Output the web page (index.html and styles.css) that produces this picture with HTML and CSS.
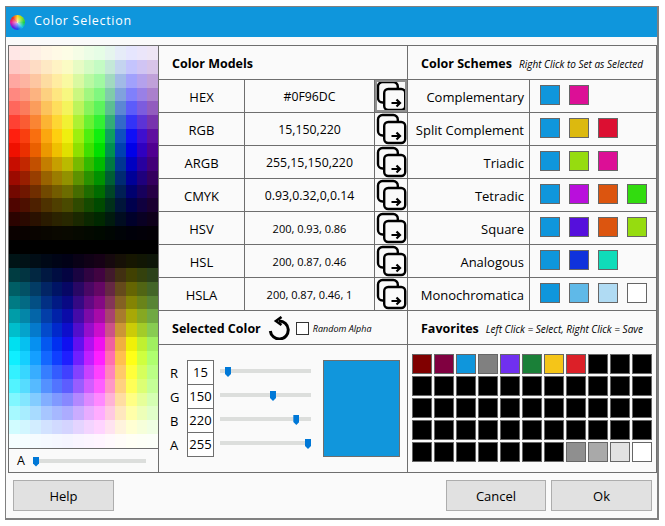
FILE: index.html
```html
<!DOCTYPE html>
<html lang="en">
<head>
    <meta charset="UTF-8">
    <meta name="viewport" content="width=device-width, initial-scale=1.0">
    <title>Color Selection</title>
    <link rel="stylesheet" href="styles.css">
</head>
<body>
    <svg class="defs" width="0" height="0">
        <symbol id="copy" viewBox="0 0 32 32">
            <path d="M22.8 8 V6.5 a4.5 4.5 0 0 0 -4.5 -4.5 H7.5 a4.5 4.5 0 0 0 -4.5 4.5 V18 a4.5 4.5 0 0 0 4.5 4.5 H9" fill="none" stroke="#000" stroke-width="2.4"/>
            <rect x="9.2" y="9" width="21" height="21" rx="4" fill="none" stroke="#000" stroke-width="2.4"/>
            <path d="M16.5 23 H25 M21.5 19.5 L25 23 L21.5 26.5" fill="none" stroke="#000" stroke-width="2.2"/>
        </symbol>
    </svg>

    <div class="window">
        <div class="titlebar">
            <span class="wheel"></span>
            <span class="title">Color Selection</span>
        </div>

        <div class="panel">
            <div class="col-picker">
                <div class="picker" id="picker"></div>
                <div class="alpha">
                    <span>A</span>
                    <input type="range" class="slider alpha-slider" min="0" max="255" value="0">
                </div>
            </div>

            <div class="col-models">
                <div class="head"><h2>Color Models</h2></div>
                <div class="model"><b>HEX</b><span>#0F96DC</span><button class="copy focus"><svg><use href="#copy"/></svg></button></div>
                <div class="model"><b>RGB</b><span>15,150,220</span><button class="copy"><svg><use href="#copy"/></svg></button></div>
                <div class="model"><b>ARGB</b><span>255,15,150,220</span><button class="copy"><svg><use href="#copy"/></svg></button></div>
                <div class="model"><b>CMYK</b><span>0.93,0.32,0,0.14</span><button class="copy"><svg><use href="#copy"/></svg></button></div>
                <div class="model"><b>HSV</b><span class="small">200, 0.93, 0.86</span><button class="copy"><svg><use href="#copy"/></svg></button></div>
                <div class="model"><b>HSL</b><span class="small">200, 0.87, 0.46</span><button class="copy"><svg><use href="#copy"/></svg></button></div>
                <div class="model"><b>HSLA</b><span class="small">200, 0.87, 0.46, 1</span><button class="copy"><svg><use href="#copy"/></svg></button></div>

                <div class="head head-selected">
                    <h2>Selected Color</h2>
                    <svg class="reset" width="24" height="24" viewBox="0 0 24 24">
                        <path d="M11 5 A9 9 0 1 1 2.3 15" fill="none" stroke="#000" stroke-width="3"/>
                        <path d="M13.5 1 L8 5 L13.5 9" fill="none" stroke="#000" stroke-width="2.6"/>
                    </svg>
                    <input type="checkbox" class="check">
                    <em class="note-small">Random Alpha</em>
                </div>
                <div class="selected">
                    <div class="channels">
                        <label>R</label><input type="text" class="num" value="15"><input type="range" class="slider" min="0" max="255" value="15">
                        <label>G</label><input type="text" class="num" value="150"><input type="range" class="slider" min="0" max="255" value="150">
                        <label>B</label><input type="text" class="num" value="220"><input type="range" class="slider" min="0" max="255" value="220">
                        <label>A</label><input type="text" class="num" value="255"><input type="range" class="slider" min="0" max="255" value="255">
                    </div>
                    <div class="preview"></div>
                </div>
            </div>

            <div class="col-schemes">
                <div class="head"><h2>Color Schemes</h2><em class="note">Right Click to Set as Selected</em></div>
                <div class="scheme"><b>Complementary</b><div class="swatches">
                    <i style="background:#0f96dc"></i><i style="background:#dc0f96"></i>
                </div></div>
                <div class="scheme"><b>Split Complement</b><div class="swatches">
                    <i style="background:#0f96dc"></i><i style="background:#dcb90f"></i><i style="background:#dc0f32"></i>
                </div></div>
                <div class="scheme"><b>Triadic</b><div class="swatches">
                    <i style="background:#0f96dc"></i><i style="background:#96dc0f"></i><i style="background:#dc0f96"></i>
                </div></div>
                <div class="scheme"><b>Tetradic</b><div class="swatches">
                    <i style="background:#0f96dc"></i><i style="background:#b90fdc"></i><i style="background:#dc550f"></i><i style="background:#32dc0f"></i>
                </div></div>
                <div class="scheme"><b>Square</b><div class="swatches">
                    <i style="background:#0f96dc"></i><i style="background:#550fdc"></i><i style="background:#dc550f"></i><i style="background:#96dc0f"></i>
                </div></div>
                <div class="scheme"><b>Analogous</b><div class="swatches">
                    <i style="background:#0f96dc"></i><i style="background:#0f32dc"></i><i style="background:#0fdcb9"></i>
                </div></div>
                <div class="scheme"><b>Monochromatica</b><div class="swatches">
                    <i style="background:#0f96dc"></i><i style="background:#5fb9e8"></i><i style="background:#b0dbf3"></i><i style="background:#ffffff"></i>
                </div></div>

                <div class="head head-favorites"><h2>Favorites</h2><em class="note">Left Click = Select, Right Click = Save</em></div>
                <div class="favorites" id="favorites"></div>
            </div>
        </div>

        <div class="buttons">
            <button class="btn">Help</button>
            <span class="spacer"></span>
            <button class="btn btn-cancel">Cancel</button>
            <button class="btn">Ok</button>
        </div>
    </div>

    <script src="picker.js"></script>
</body>
</html>
```

FILE: styles.css
```css
* {
    box-sizing: border-box;
}

body {
    margin: 0;
    padding: 6px 0 0 5px;
    background-color: #fff;
    font-family: "Open Sans", "Noto Sans", sans-serif;
    font-size: 13px;
    color: #000;
}

.defs {
    position: absolute;
}

.window {
    width: 654px;
    height: 514px;
    border: 1px solid #808080;
    border-width: 1px 2px 2px 1px;
    background-color: #fafafa;
}

.titlebar {
    display: flex;
    align-items: center;
    height: 30px;
    padding-left: 4px;
    background-color: #0f96dc;
    color: #fff;
}

.wheel {
    width: 15px;
    height: 15px;
    margin-top: 1px;
    border-radius: 50%;
    background:
        radial-gradient(circle, rgba(255, 255, 255, 0.7) 0, rgba(255, 255, 255, 0) 60%),
        conic-gradient(#ffd21a, #8fe01a, #1ad04a, #1ac8e0, #1a50f0, #6a1ae0, #e01a9a, #f0301a, #ffd21a);
}

.title {
    margin: -3px 0 0 9px;
    font-size: 12.5px;
    letter-spacing: 0.7px;
}

.panel {
    display: grid;
    grid-template-columns: 150px 249px 248px;
    width: 649px;
    height: 428px;
    margin: 8px 0 0 2px;
    border: 1px solid #6e6e6e;
}

.col-picker {
    display: flex;
    flex-direction: column;
    border-right: 1px solid #6e6e6e;
}

.picker {
    display: grid;
    grid-template-columns: repeat(14, 1fr);
    grid-template-rows: repeat(29, 1fr);
    height: 402px;
}

.alpha {
    display: flex;
    align-items: center;
    flex: 1;
    padding-left: 8px;
    border-top: 1px solid #6e6e6e;
}

.alpha span {
    width: 16px;
    font-size: 12.5px;
}

.col-models {
    border-right: 1px solid #6e6e6e;
}

.head {
    display: flex;
    align-items: center;
    height: 34px;
    padding: 2px 0 0 13px;
    border-bottom: 1px solid #6e6e6e;
}

h2 {
    margin: 0;
    font-size: 12.5px;
    font-weight: 700;
}

.model {
    display: grid;
    grid-template-columns: 86px 130px 32px;
    grid-template-rows: 32px;
    height: 33px;
    border-bottom: 1px solid #6e6e6e;
    text-align: center;
}

.model b,
.model span {
    line-height: 34px;
    border-right: 1px solid #6e6e6e;
}

.model b {
    font-size: 13px;
    font-weight: 500;
}

.model span {
    font-size: 12.3px;
}

.model .small {
    font-size: 11px;
}

.copy {
    width: 32px;
    height: 32px;
    padding: 0;
    border: 0;
    background: none;
}

.copy svg {
    display: block;
    width: 32px;
    height: 32px;
}

.copy.focus {
    outline: 2px solid #909090;
    outline-offset: -2px;
}

.head-selected .reset {
    margin: -2px 0 0 7px;
}

.check {
    appearance: none;
    width: 13px;
    height: 13px;
    margin: 0 0 0 4px;
    border: 1px solid #333;
    background-color: #fff;
}

.note-small {
    margin-left: 4px;
    font-size: 9px;
}

.selected {
    display: flex;
    align-items: flex-start;
    padding: 15px 0 0 11px;
}

.channels {
    display: grid;
    grid-template-columns: 17px 27px 91px;
    grid-auto-rows: 24px;
}

.channels label {
    font-size: 13px;
    line-height: 26px;
}

.num {
    width: 27px;
    height: 25px;
    padding: 0 0 2px;
    border: 1px solid #6e6e6e;
    background-color: #fff;
    font-family: inherit;
    font-size: 13px;
    text-align: center;
    color: #000;
}

.slider {
    appearance: none;
    -webkit-appearance: none;
    display: block;
    width: 91px;
    height: 22px;
    margin: 0 0 0 6px;
    background: none;
}

.slider::-webkit-slider-runnable-track {
    height: 4px;
    background-color: #dcdedc;
}

.slider::-webkit-slider-thumb {
    -webkit-appearance: none;
    width: 6px;
    height: 10px;
    margin-top: -2px;
    background-color: #0078d7;
    clip-path: polygon(0 0, 100% 0, 100% 70%, 50% 100%, 0 70%);
}

.alpha-slider {
    width: 113px;
    margin: 0;
}

.preview {
    width: 77px;
    height: 97px;
    margin-left: 18px;
    border: 1px solid #6e6e6e;
    background-color: #1196dc;
}

.note {
    margin-left: 7px;
    font-size: 10px;
}

.scheme {
    display: grid;
    grid-template-columns: 122px 1fr;
    grid-template-rows: 32px;
    height: 33px;
    border-bottom: 1px solid #6e6e6e;
}

.scheme b {
    padding-right: 5px;
    border-right: 1px solid #6e6e6e;
    font-size: 13px;
    font-weight: 400;
    line-height: 34px;
    text-align: right;
    white-space: nowrap;
}

.swatches {
    display: flex;
    gap: 9px;
    padding: 5px 0 0 10px;
}

.swatches i,
.favorites i {
    display: block;
    width: 20px;
    height: 20px;
    border: 1px solid #666;
}

.favorites {
    display: grid;
    grid-template-columns: repeat(11, 20px);
    grid-auto-rows: 20px;
    gap: 2px;
    padding: 9px 0 0 4px;
}

.buttons {
    display: flex;
    gap: 5px;
    padding: 7px 5px 0 7px;
}

.spacer {
    flex: 1;
}

.btn {
    width: 101px;
    height: 31px;
    border: 1px solid #adadad;
    background-color: #e1e1e1;
    font-family: inherit;
    font-size: 13px;
    color: #000;
}

.btn-cancel {
    width: 100px;
}
```

FILE: picker.js
```js
// Base colours of the palette columns, row 7 is the bright band
var bases = [
    [240, 16, 0], [234, 48, 0], [234, 96, 0], [236, 152, 0], [239, 192, 0], [224, 224, 0], [143, 224, 0],
    [63, 224, 0], [0, 224, 0], [0, 144, 80], [0, 64, 176], [0, 0, 232], [48, 0, 192], [80, 0, 144]
];

// Rows 0-13 darken towards black at row 14, rows 15-28 come back up with the inverted colours
var topMix = [0.9, 0.77, 0.63, 0.5, 0.36, 0.2, 0.06];
var topDark = [1, 0.83, 0.65, 0.48, 0.33, 0.18, 0.04, 0];
var bottomDark = [0.09, 0.27, 0.42, 0.55, 0.7, 0.85, 1];
var bottomMix = [0.06, 0.2, 0.32, 0.5, 0.65, 0.82, 0.96];

function shade(base, mix, dark) {
    var out = [];
    for (var i = 0; i < 3; i++) {
        var c = base[i];
        if (mix !== null) {
            c = c * 255 / 240 * (1 - mix) + 255 * mix;
        } else {
            c = c * dark;
        }
        out.push(Math.round(Math.min(c, 255)));
    }
    return "rgb(" + out.join(",") + ")";
}

function cellColor(row, col) {
    var base = bases[col];
    if (row < 7) return shade(base, topMix[row], 1);
    if (row <= 14) return shade(base, null, topDark[row - 7]);
    var inverted = [240 - base[0], 240 - base[1], 240 - base[2]];
    if (row <= 21) return shade(inverted, null, bottomDark[row - 15]);
    return shade(inverted, bottomMix[row - 22], 1);
}

var picker = document.getElementById("picker");
for (var row = 0; row < 29; row++) {
    for (var col = 0; col < 14; col++) {
        var cell = document.createElement("div");
        cell.style.backgroundColor = cellColor(row, col);
        picker.appendChild(cell);
    }
}

// Saved colours, the rest of the grid is black
var saved = {
    0: "#800000", 1: "#800040", 2: "#0f96dc", 3: "#808080", 4: "#7030f0", 5: "#1a8038", 6: "#f5c518", 7: "#dc2028",
    51: "#8f8f8f", 52: "#a9a9a9", 53: "#e2e2e2", 54: "#ffffff"
};

var favorites = document.getElementById("favorites");
for (var i = 0; i < 55; i++) {
    var swatch = document.createElement("i");
    swatch.style.backgroundColor = saved[i] || "#000000";
    favorites.appendChild(swatch);
}
```
